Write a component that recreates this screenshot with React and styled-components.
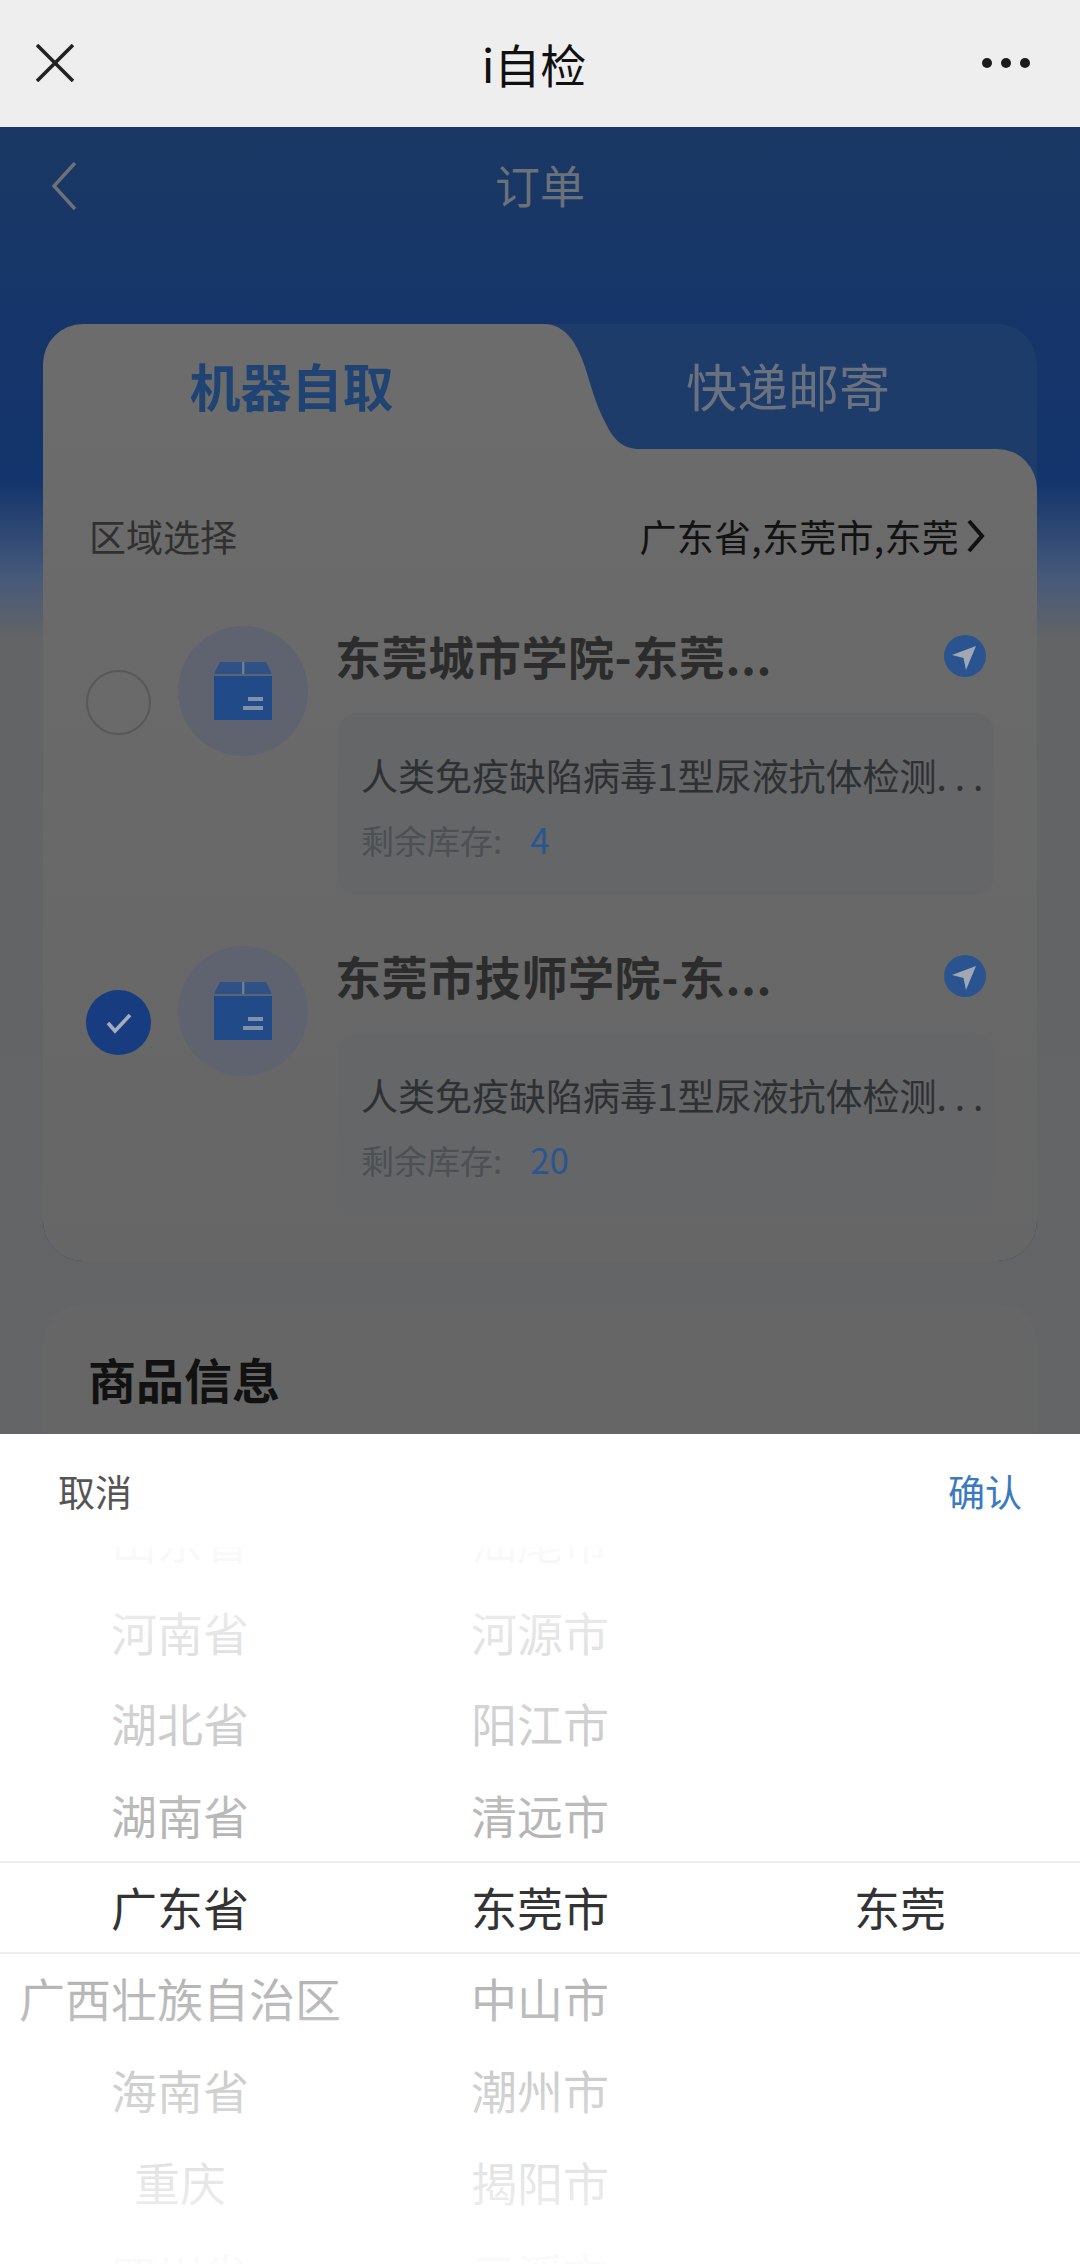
import React from "react";
import styled, { createGlobalStyle } from "styled-components";

const FONT = `"Noto Sans CJK SC", "Noto Sans", sans-serif`;

const GlobalStyle = createGlobalStyle`
  html, body {
    margin: 0;
    padding: 0;
    background: #fff;
  }
  * {
    box-sizing: border-box;
  }
`;

const Screen = styled.div`
  position: relative;
  width: 1080px;
  height: 2264px;
  overflow: hidden;
  font-family: ${FONT};
`;

const TopBar = styled.div`
  display: flex;
  align-items: center;
  justify-content: space-between;
  height: 127px;
  padding: 0 50px 2px 36px;
  background: #eeeeee;
`;

const TopTitle = styled.div`
  font-size: 46px;
  line-height: 60px;
  color: #111;
  margin-left: 12px;
`;

const Dots = styled.div`
  display: flex;
  gap: 9px;
`;

const Dot = styled.span`
  width: 10px;
  height: 10px;
  border-radius: 50%;
  background: #1c1c1c;
`;

/* the page is painted in its dimmed colours, the way it sits behind the sheet */
const Page = styled.div`
  height: 2137px;
  padding: 0 43px;
  background: linear-gradient(
    180deg,
    #1a3863 0,
    #16366a 173px,
    #13346c 353px,
    #46597a 450px,
    #626466 510px,
    #636567 100%
  );
`;

const NavBar = styled.div`
  position: relative;
  display: flex;
  align-items: center;
  justify-content: center;
  height: 197px;
  padding-bottom: 81px;
`;

const NavBack = styled.svg`
  position: absolute;
  left: 7px;
  top: 34px;
`;

const NavTitle = styled.div`
  font-size: 45px;
  line-height: 60px;
  color: #6c7078;
`;

const Card = styled.div`
  border-radius: 40px;
  background: #1e3c6a;
`;

const TabRow = styled.div`
  display: flex;
  height: 125px;
`;

const ActiveTab = styled.div`
  display: flex;
  align-items: center;
  justify-content: center;
  width: 487px;
  padding: 0 0 4px 10px;
  border-radius: 40px 0 0 0;
  background: #6c6c6c;
  font-size: 51px;
  font-weight: 700;
  color: #1f4474;
`;

const TabCurve = styled.svg`
  display: block;
  flex: none;
`;

const IdleTab = styled.div`
  display: flex;
  flex: 1;
  align-items: center;
  justify-content: center;
  padding: 0 101px 4px 0;
  font-size: 51px;
  white-space: nowrap;
  color: #6a7280;
`;

const CardBody = styled.div`
  height: 812px;
  padding: 0 43px 0 43px;
  border-radius: 0 40px 40px 40px;
  background: linear-gradient(180deg, #6b6b6b 0, #666666 100%);
`;

const RegionRow = styled.div`
  display: flex;
  align-items: center;
  justify-content: space-between;
  height: 176px;
  padding: 0 0 3px 3px;
`;

const RegionLabel = styled.div`
  font-size: 37px;
  color: #303030;
`;

const RegionValue = styled.div`
  display: flex;
  align-items: center;
  gap: 8px;
  padding-right: 9px;
  font-size: 37px;
  letter-spacing: 0.3px;
  color: #121212;
`;

const Station = styled.div`
  display: flex;
  margin-bottom: 50px;
`;

const Radio = styled.div`
  display: flex;
  align-items: center;
  justify-content: center;
  flex: none;
  width: 65px;
  height: 65px;
  margin-top: 45px;
  border-radius: 50%;
  border: ${(p) => (p.$checked ? "none" : "2px solid #58585a")};
  background: ${(p) => (p.$checked ? "#173c80" : "transparent")};
`;

const IconCircle = styled.div`
  display: flex;
  align-items: center;
  justify-content: center;
  flex: none;
  width: 130px;
  height: 130px;
  margin: 1px 0 0 27px;
  border-radius: 50%;
  background: #5f636f;
`;

const StationInfo = styled.div`
  flex: 1;
  margin-left: 27px;
  min-width: 0;
`;

const StationHead = styled.div`
  display: flex;
  align-items: center;
  justify-content: space-between;
  height: 88px;
  padding: 0 8px 27px 0;
`;

const StationName = styled.div`
  font-size: 46px;
  font-weight: 700;
  line-height: 61px;
  letter-spacing: 0.6px;
  white-space: nowrap;
  color: #2c2c2c;
`;

const ProductBox = styled.div`
  height: 182px;
  margin-left: 3px;
  padding: 35px 0 0 23px;
  border-radius: 20px;
  background: #646668;
`;

const ProductName = styled.div`
  font-size: 37px;
  line-height: 54px;
  white-space: nowrap;
  color: #2e3032;
`;

const Ellipsis = styled.span`
  letter-spacing: 8px;
`;

const Stock = styled.div`
  margin-top: 13px;
  font-size: 33px;
  line-height: 48px;
  color: #4c4f53;
`;

const StockCount = styled.span`
  margin-left: 28px;
  font-size: 35px;
  color: #2a5590;
`;

const GoodsCard = styled.div`
  height: 400px;
  margin-top: 43px;
  padding: 39px 45px;
  border-radius: 40px;
  background: #666666;
`;

const GoodsTitle = styled.div`
  font-size: 48px;
  font-weight: 700;
  line-height: 70px;
  color: #111;
`;

const Sheet = styled.div`
  position: absolute;
  left: 0;
  right: 0;
  bottom: 0;
  height: 830px;
  background: #fff;
`;

const SheetBar = styled.div`
  display: flex;
  justify-content: space-between;
  height: 113px;
  padding: 27px 58px 0;
  font-size: 37px;
  line-height: 60px;
`;

const SheetAction = styled.div`
  color: ${(p) => (p.$primary ? "#3b7ac0" : "#555")};
`;

const Picker = styled.div`
  position: relative;
  display: grid;
  grid-template-columns: repeat(3, 360px);
  height: 717px;
  overflow: hidden;
`;

const Column = styled.div`
  transform: translateY(-53px);
`;

const Option = styled.div`
  height: 91.7px;
  font-size: 46px;
  line-height: 91.7px;
  text-align: center;
  white-space: nowrap;
  color: #333;
`;

const Fade = styled.div`
  position: absolute;
  left: 0;
  right: 0;
  height: 314px;
  ${(p) => (p.$top ? "top: 0;" : "bottom: 0;")}
  background: linear-gradient(
    ${(p) => (p.$top ? "0deg" : "180deg")},
    rgba(255, 255, 255, 0.6),
    rgba(255, 255, 255, 0.98)
  );
`;

const SelectedBand = styled.div`
  position: absolute;
  left: 0;
  right: 0;
  top: 314px;
  height: 93px;
  border-top: 2px solid #efefef;
  border-bottom: 2px solid #efefef;
`;

const CloseIcon = () => (
  <svg width="38" height="38" viewBox="0 0 38 38" fill="none" stroke="#222" strokeWidth="3.6">
    <path d="M1 1l36 36M37 1L1 37" />
  </svg>
);

const BackIcon = () => (
  <NavBack width="28" height="50" viewBox="0 0 28 50" fill="none" stroke="#6d7177" strokeWidth="3.4">
    <path d="M25 2L4 25l21 23" />
  </NavBack>
);

const ChevronIcon = () => (
  <svg width="18" height="34" viewBox="0 0 18 34" fill="none" stroke="#111" strokeWidth="4">
    <path d="M2 2l13 15L2 32" />
  </svg>
);

const BoxIcon = () => (
  <svg width="58" height="58" viewBox="0 0 58 58">
    <path d="M6 0h46l6 12H0z" fill="#2f5185" />
    <path d="M0 14h58v44H0z" fill="#214a88" />
    <path d="M28 0h2.4v12H28z" fill="#6f7c92" />
    <path d="M34 35h15v4H34zM29 44h20v4H29z" fill="#8291a8" />
  </svg>
);

const LocateIcon = () => (
  <svg width="42" height="42" viewBox="0 0 42 42">
    <circle cx="21" cy="21" r="21" fill="#2a5490" />
    <path d="M8 20L32 11 22 35 19.5 23z" fill="#a0a8b4" />
  </svg>
);

const CheckIcon = () => (
  <svg width="26" height="22" viewBox="0 0 26 22" fill="none" stroke="#a5adba" strokeWidth="3.6">
    <path d="M2 11l7 8L24 3" />
  </svg>
);

const provinces = ["山东省", "河南省", "湖北省", "湖南省", "广东省", "广西壮族自治区", "海南省", "重庆", "四川省"];
const cities = ["汕尾市", "河源市", "阳江市", "清远市", "东莞市", "中山市", "潮州市", "揭阳市", "云浮市"];
const districts = ["", "", "", "", "东莞"];

const stations = [
  { name: "东莞城市学院-东莞...", stock: 4, checked: false },
  { name: "东莞市技师学院-东...", stock: 20, checked: true },
];

const App = () => (
  <Screen>
    <GlobalStyle />
    <TopBar>
      <CloseIcon />
      <TopTitle>i自检</TopTitle>
      <Dots>
        <Dot />
        <Dot />
        <Dot />
      </Dots>
    </TopBar>

    <Page>
      <NavBar>
        <BackIcon />
        <NavTitle>订单</NavTitle>
      </NavBar>

      <Card>
        <TabRow>
          <ActiveTab>机器自取</ActiveTab>
          <TabCurve width="110" height="125" viewBox="0 0 110 125">
            <path d="M0 0H14C35 0 47 19 55 43C61 62 66 81 75 98C83 115 92 125 110 125H0Z" fill="#6c6c6c" />
          </TabCurve>
          <IdleTab>快递邮寄</IdleTab>
        </TabRow>
        <CardBody>
          <RegionRow>
            <RegionLabel>区域选择</RegionLabel>
            <RegionValue>
              广东省,东莞市,东莞
              <ChevronIcon />
            </RegionValue>
          </RegionRow>
          {stations.map((s) => (
            <Station key={s.name}>
              <Radio $checked={s.checked}>{s.checked && <CheckIcon />}</Radio>
              <IconCircle>
                <BoxIcon />
              </IconCircle>
              <StationInfo>
                <StationHead>
                  <StationName>{s.name}</StationName>
                  <LocateIcon />
                </StationHead>
                <ProductBox>
                  <ProductName>
                    人类免疫缺陷病毒1型尿液抗体检测<Ellipsis>...</Ellipsis>
                  </ProductName>
                  <Stock>
                    剩余库存:
                    <StockCount>{s.stock}</StockCount>
                  </Stock>
                </ProductBox>
              </StationInfo>
            </Station>
          ))}
        </CardBody>
      </Card>

      <GoodsCard>
        <GoodsTitle>商品信息</GoodsTitle>
      </GoodsCard>
    </Page>

    <Sheet>
      <SheetBar>
        <SheetAction>取消</SheetAction>
        <SheetAction $primary>确认</SheetAction>
      </SheetBar>
      <Picker>
        <Column>
          {provinces.map((p) => (
            <Option key={p}>{p}</Option>
          ))}
        </Column>
        <Column>
          {cities.map((c) => (
            <Option key={c}>{c}</Option>
          ))}
        </Column>
        <Column>
          {districts.map((d, i) => (
            <Option key={i}>{d}</Option>
          ))}
        </Column>
        <Fade $top />
        <Fade />
        <SelectedBand />
      </Picker>
    </Sheet>
  </Screen>
);

export default App;
